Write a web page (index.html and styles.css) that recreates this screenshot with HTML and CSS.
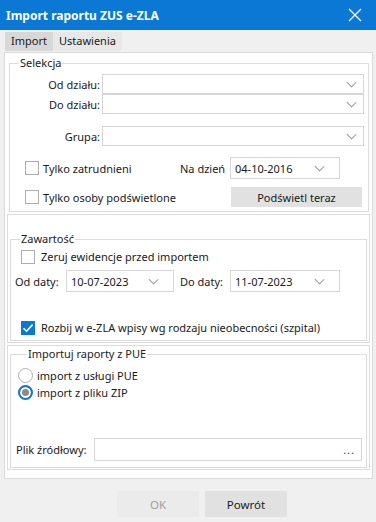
FILE: index.html
```html
<!DOCTYPE html>
<html lang="pl">
<head>
  <meta charset="UTF-8" />
  <title>Import raportu ZUS e-ZLA</title>
  <link rel="stylesheet" href="styles.css">
</head>
<body>
  <div class="window">
    <!-- Title bar -->
    <div class="titlebar">
      <span>Import raportu ZUS e-ZLA</span>
      <svg class="close" width="14" height="14" viewBox="0 0 14 14">
        <path d="M1 1 L13 13 M13 1 L1 13" stroke="#fff" stroke-width="1.3" fill="none" />
      </svg>
    </div>

    <div class="tabs">
      <span class="tab active">Import</span>
      <span class="tab">Ustawienia</span>
    </div>

    <div class="page">
      <!-- Selekcja -->
      <fieldset class="group group-sel">
        <legend>Selekcja</legend>
        <div class="field">
          <span class="lbl">Od działu:</span>
          <div class="combo"><span></span><i class="chev"></i></div>
        </div>
        <div class="field">
          <span class="lbl">Do działu:</span>
          <div class="combo"><span></span><i class="chev"></i></div>
        </div>
        <div class="field field-grupa">
          <span class="lbl">Grupa:</span>
          <div class="combo"><span></span><i class="chev"></i></div>
        </div>
        <div class="opt-row opt-date">
          <label class="check"><span class="box"></span>Tylko zatrudnieni</label>
          <span class="na-dzien">Na dzień</span>
          <div class="combo date"><span>04-10-2016</span><i class="chev"></i></div>
        </div>
        <div class="opt-row opt-btn">
          <label class="check"><span class="box"></span>Tylko osoby podświetlone</label>
          <button class="btn btn-wide">Podświetl teraz</button>
        </div>
      </fieldset>

      <!-- Zawartość -->
      <div class="panel panel-content">
        <fieldset class="group group-content">
          <legend>Zawartość</legend>
          <label class="check check-zeruj"><span class="box"></span>Zeruj ewidencje przed importem</label>
          <div class="dates">
            <span class="date-lbl">Od daty:</span>
            <div class="combo date date-from"><span>10-07-2023</span><i class="chev"></i></div>
            <span class="date-lbl date-lbl-to">Do daty:</span>
            <div class="combo date"><span>11-07-2023</span><i class="chev"></i></div>
          </div>
          <label class="check check-rozbij">
            <span class="box checked">
              <svg width="14" height="14" viewBox="0 0 14 14"><path d="M2.5 7.2 L5.6 10.2 L11.6 3.6" stroke="#fff" stroke-width="1.6" fill="none" /></svg>
            </span>Rozbij w e-ZLA wpisy wg rodzaju nieobecności (szpital)
          </label>
        </fieldset>
      </div>

      <!-- Importuj raporty z PUE -->
      <div class="panel panel-pue">
        <fieldset class="group group-pue">
          <legend>Importuj raporty z PUE</legend>
          <label class="radio radio-first"><span class="dot"></span>import z usługi PUE</label>
          <label class="radio"><span class="dot on"></span>import z pliku ZIP</label>
          <div class="file-row">
            <span class="file-lbl">Plik źródłowy:</span>
            <div class="textbox"><span class="more">...</span></div>
          </div>
        </fieldset>
      </div>
    </div>

    <div class="buttons">
      <button class="btn disabled">OK</button>
      <button class="btn">Powrót</button>
    </div>
  </div>
</body>
</html>
```

FILE: styles.css
```css
* {
  box-sizing: border-box;
}

body {
  margin: 0;
  font-family: "Noto Sans", "Open Sans", sans-serif;
  font-size: 11px;
  color: #1a1a1a;
}

.window {
  width: 376px;
  height: 522px;
  background: #f0f0f0;
  display: flex;
  flex-direction: column;
}

.titlebar {
  height: 30px;
  background: #0a78d4;
  color: #fff;
  font-size: 12px;
  font-weight: bold;
  display: flex;
  align-items: center;
  justify-content: space-between;
  padding: 0 14px 0 6px;
}

.tabs {
  height: 22px;
  display: flex;
  padding: 2px 0 0 5px;
}

.tab {
  height: 19px;
  line-height: 18px;
  padding: 0 6px;
  background: #e8e8e8;
}

.tab.active {
  background: #d8d8d8;
}

.page {
  margin: 0 3px 0 4px;
  height: 427px;
  border: 1px solid #dadada;
  background: #fff;
  padding: 2px 2px 0 2px;
}

.group {
  margin: 0;
  border: 1px solid #dcdcdc;
  padding: 0;
  min-width: 0;
}

.group legend {
  padding: 0 1px;
  margin-left: 9px;
  line-height: 16px;
  color: #222;
}

.group-sel {
  margin: 0 1px 0 2px;
  padding: 3px 4px 4px 0;
  height: 157px;
}

.field {
  display: flex;
  align-items: center;
  height: 20px;
}

.field-grupa {
  margin-top: 12px;
}

.lbl {
  width: 92px;
  text-align: right;
  padding-right: 2px;
}

.combo {
  flex: 1;
  height: 20px;
  border: 1px solid #d6d6d6;
  background: #fff;
  display: flex;
  align-items: center;
  justify-content: space-between;
  padding: 0 6px 0 4px;
}

.chev {
  width: 7px;
  height: 7px;
  border-right: 1px solid #9a9a9a;
  border-bottom: 1px solid #9a9a9a;
  transform: translateY(-2px) rotate(45deg) scaleX(1.05);
  margin-right: 2px;
}

.date {
  flex: none;
  width: 110px;
  height: 22px;
  padding: 0 14px 0 4px;
}

.opt-row {
  display: flex;
  align-items: center;
  padding-left: 15px;
}

.opt-date {
  margin-top: 11px;
}

.opt-btn {
  margin-top: 8px;
}

.opt-row .check {
  width: 155px;
}

.na-dzien {
  width: 50px;
}

.check,
.radio {
  display: flex;
  align-items: center;
  gap: 4px;
}

.box {
  width: 14px;
  height: 14px;
  border: 1px solid #adadad;
  background: #fff;
  flex: none;
}

.box.checked {
  background: #0a78d4;
  border-color: #0a78d4;
}

.box svg {
  display: block;
  margin: -1px;
}

.btn {
  font: inherit;
  color: #1a1a1a;
  background: #e1e1e1;
  border: none;
  height: 20px;
  padding: 0;
}

.btn-wide {
  width: 131px;
  margin-left: 51px;
}

.panel {
  border: 1px solid #dcdcdc;
  margin-top: 2px;
  padding: 0 2px 1px 2px;
}

.panel-content {
  padding-top: 16px;
}

.group-content {
  height: 110px;
  padding: 0;
}

.check-zeruj {
  margin: 2px 0 0 10px;
  gap: 6px;
}

.dates {
  display: flex;
  align-items: center;
  margin-top: 6px;
}

.date-lbl {
  width: 55px;
  padding-left: 4px;
}

.date-lbl-to {
  width: 56px;
  padding-left: 6px;
}

.date-from {
  width: 108px;
}

.check-rozbij {
  margin: 28px 0 0 10px;
  gap: 6px;
}

.group-pue {
  height: 122px;
  padding: 0 0 0 7px;
}

.radio {
  height: 16px;
  margin-top: 1px;
}

.radio-first {
  margin-top: 5px;
}

.dot {
  width: 15px;
  height: 15px;
  border-radius: 50%;
  border: 1px solid #b0b0b0;
  background: #fff;
  flex: none;
}

.dot.on {
  border: 2px solid #0a78d4;
  box-shadow: inset 0 0 0 2px #fff;
  background: #8a8a8a;
}

.file-row {
  display: flex;
  align-items: center;
  margin-top: 38px;
  padding-right: 4px;
}

.file-lbl {
  width: 78px;
  margin-left: -2px;
}

.textbox {
  flex: 1;
  height: 23px;
  border: 1px solid #d6d6d6;
  display: flex;
  align-items: center;
  justify-content: flex-end;
  padding-right: 6px;
}

.more {
  letter-spacing: 1px;
  color: #444;
}

.buttons {
  display: flex;
  gap: 6px;
  padding: 12px 0 0 117px;
}

.buttons .btn {
  width: 82px;
  height: 26px;
  font-size: 11.5px;
}

.buttons .btn.disabled {
  color: #a0a0a0;
  background: #ebebeb;
}
```
